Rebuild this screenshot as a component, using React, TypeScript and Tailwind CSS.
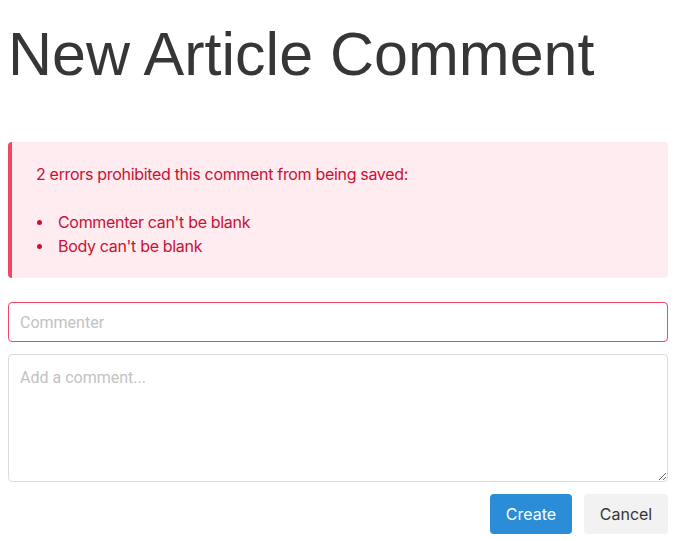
import React from 'react';

const errors = ["Commenter can't be blank", "Body can't be blank"];

export default function App() {
  return (
    <div className="w-[668px] pl-2 pt-[14px] text-[#363636] font-['Inter','Roboto',sans-serif]">
      <h1 className="text-[61px] leading-[80px] font-['Liberation_Sans',Arial,sans-serif] text-[#363636]">
        New Article Comment
      </h1>

      <div className="mt-[48px] rounded bg-[#feecf0] border-l-4 border-[#f14668] px-6 py-5 text-base leading-6 tracking-[-0.32px] text-[#cc0f35]">
        <p>2 errors prohibited this comment from being saved:</p>
        <ul className="mt-6">
          {errors.map((e) => (
            <li key={e} className="flex items-center">
              <span className="w-[5px] h-[5px] rounded-full bg-[#cc0f35] ml-[1px] mr-[16px]" />
              {e}
            </li>
          ))}
        </ul>
      </div>

      <form className="mt-6 flex flex-col gap-3">
        <input
          placeholder="Commenter"
          className="h-10 w-full rounded border border-[#f14668] px-[11px] text-base font-['Roboto',sans-serif] placeholder:text-[#c2c2c2] outline-none"
        />
        <textarea
          placeholder="Add a comment..."
          className="h-[128px] w-full rounded border border-[#dbdbdb] px-[11px] py-[11px] text-base font-['Roboto',sans-serif] placeholder:text-[#c2c2c2] outline-none resize-y"
        />
        <div className="flex justify-end gap-3">
          <button
            type="button"
            className="h-10 w-[82px] rounded bg-[#2b8dd8] text-white text-base"
          >
            Create
          </button>
          <button
            type="button"
            className="h-10 w-[84px] rounded bg-[#f2f2f2] text-[#363636] text-base"
          >
            Cancel
          </button>
        </div>
      </form>
    </div>
  );
}
